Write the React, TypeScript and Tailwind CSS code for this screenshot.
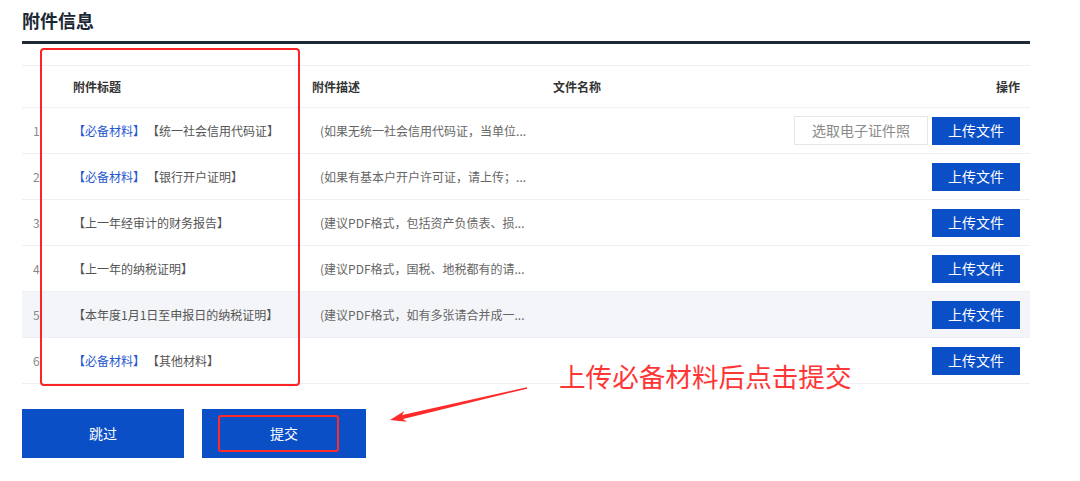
type Row = {
  required?: boolean;
  title: string;
  desc: string;
  picker?: boolean;
  shaded?: boolean;
};

const rows: Row[] = [
  { required: true, title: '【统一社会信用代码证】', desc: '(如果无统一社会信用代码证，当单位...', picker: true },
  { required: true, title: '【银行开户证明】', desc: '(如果有基本户开户许可证，请上传；...' },
  { title: '【上一年经审计的财务报告】', desc: '(建议PDF格式，包括资产负债表、损...' },
  { title: '【上一年的纳税证明】', desc: '(建议PDF格式，国税、地税都有的请...' },
  { title: '【本年度1月1日至申报日的纳税证明】', desc: '(建议PDF格式，如有多张请合并成一...', shaded: true },
  { required: true, title: '【其他材料】', desc: '' },
];

const cols = 'grid grid-cols-[51px_239px_241px_1fr_auto] items-center';

export default function App() {
  return (
    <div className="relative w-[1080px] h-[481px] bg-white overflow-hidden font-['Noto_Sans_CJK_SC','Noto_Sans',sans-serif]">
      <div className="pl-[22px] pt-[8px] w-[1030px]">
        {/* Section title */}
        <h2 className="h-[24px] leading-[24px] text-[18px] font-bold text-[#1c2733]">附件信息</h2>
        <div className="mt-[9px] h-[3px] bg-[#1f2a36]" />

        {/* Attachment table */}
        <div className="mt-[21px] border-t border-[#eef0f5] text-[12px]">
          <div className={`${cols} h-[42px] border-b border-[#eef0f5] font-bold text-[#333]`}>
            <span />
            <span>附件标题</span>
            <span>附件描述</span>
            <span>文件名称</span>
            <span className="pr-[10px] text-right">操作</span>
          </div>

          {rows.map((row, i) => (
            <div
              key={i}
              className={`${cols} h-[46px] border-b border-[#eef0f5] ${row.shaded ? 'bg-[#f4f5f9]' : ''}`}
            >
              <span className="pl-[11px] text-[#888]">{i + 1}</span>
              <span className="whitespace-nowrap text-[#555]">
                {row.required && <span className="mr-[8px] text-[#1f58cf]">【必备材料】</span>}
                {row.title}
              </span>
              <span className="pl-[8px] whitespace-nowrap text-[#666]">{row.desc}</span>
              <span />
              <div className="flex items-center justify-end gap-[4px] pr-[10px]">
                {row.picker && (
                  <div className="flex h-[29px] w-[134px] items-center justify-center border border-[#e4e6ea] bg-white text-[14px] text-[#8a8a8a]">
                    选取电子证件照
                  </div>
                )}
                <button className="h-[28px] w-[88px] bg-[#0b4fc7] text-[14px] text-white">上传文件</button>
              </div>
            </div>
          ))}
        </div>

        {/* Footer actions */}
        <div className="mt-[25px] flex gap-[18px]">
          <button className="h-[49px] w-[162px] bg-[#0b4fc7] text-[14px] text-white">跳过</button>
          <button className="relative h-[49px] w-[164px] bg-[#0b4fc7] text-[14px] text-white">
            提交
            <span className="absolute left-[16px] top-[6px] h-[37px] w-[121px] rounded-[3px] border-2 border-[#ff2a2a]" />
          </button>
        </div>
      </div>

      {/* Annotation overlays */}
      <div className="absolute left-[40px] top-[48px] h-[338px] w-[260px] rounded-[4px] border-2 border-[#ff2424]" />
      <div className="absolute left-[559px] top-[360px] whitespace-nowrap text-[26.6px] leading-[32px] text-[#ff3636]">
        上传必备材料后点击提交
      </div>
      <svg className="absolute left-[385px] top-[380px]" width="150" height="48" viewBox="0 0 150 48">
        <polygon
          points="5,40 19.35,31.04 17.2,35.1 141.84,7.32 142.16,8.68 18.1,39 21.85,41.76"
          fill="#ff2a2a"
        />
      </svg>
    </div>
  );
}
